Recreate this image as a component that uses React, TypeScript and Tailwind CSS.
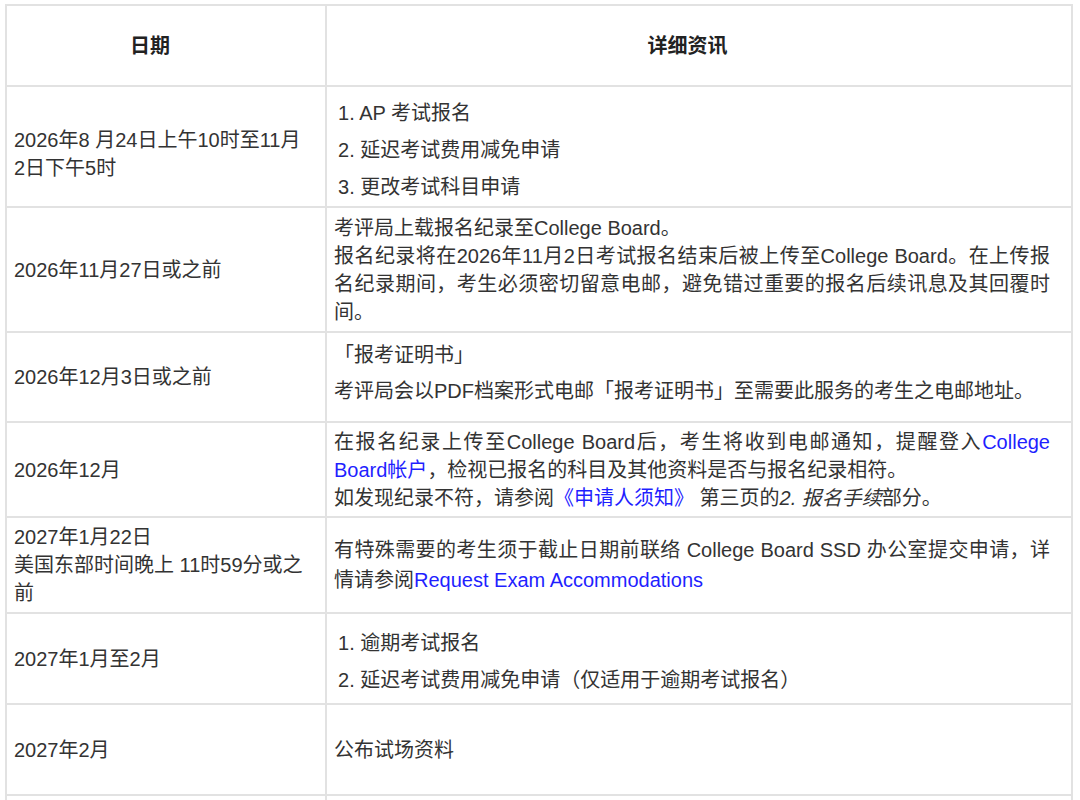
const font = { fontFamily: '"Liberation Sans", "Noto Sans CJK SC", sans-serif' };

function Link({ children }: { children: React.ReactNode }) {
  return <span className="text-[#1f1fff]">{children}</span>;
}

function Row({
  h,
  left,
  right,
  leftClass = "",
  rightClass = "",
}: {
  h: string;
  left: React.ReactNode;
  right: React.ReactNode;
  leftClass?: string;
  rightClass?: string;
}) {
  return (
    <div className={`flex border-b-2 border-[#e2e2e2] ${h}`}>
      <div className={`w-[320px] shrink-0 border-r-2 border-[#e2e2e2] pl-[7px] pr-[16px] flex items-center ${leftClass}`}>
        <div>{left}</div>
      </div>
      <div className={`flex-1 pl-[7px] pr-[21px] flex items-center ${rightClass}`}>
        <div className="w-full text-justify">{right}</div>
      </div>
    </div>
  );
}

function List({ items }: { items: string[] }) {
  return (
    <ol className="pl-[4px]">
      {items.map((t, i) => (
        <li key={i} className="h-[37px] flex items-center">
          {i + 1}. {t}
        </li>
      ))}
    </ol>
  );
}

export default function App() {
  return (
    <div className="min-h-[800px] bg-white overflow-hidden" style={font}>
      <div className="ml-[5px] mt-[4px] w-[1068px] border-x-2 border-t-2 border-[#e2e2e2] text-[20px] leading-[28px] text-[#333]">
        <div className="flex h-[81px] border-b-2 border-[#e2e2e2] font-bold text-[#222]">
          <div className="w-[320px] shrink-0 border-r-2 border-[#e2e2e2] flex items-center justify-center pr-[32px]">
            日期
          </div>
          <div className="flex-1 flex items-center justify-center pr-[23px]">详细资讯</div>
        </div>

        <Row
          h="h-[121px]"
          leftClass="pt-[14px]"
          rightClass="pt-[7px]"
          left="2026年8 月24日上午10时至11月2日下午5时"
          right={<List items={["AP 考试报名", "延迟考试费用减免申请", "更改考试科目申请"]} />}
        />

        <Row
          h="h-[125px]"
          left="2026年11月27日或之前"
          right={
            <>
              <p>考评局上载报名纪录至College Board。</p>
              <p>
                报名纪录将在2026年11月2日考试报名结束后被上传至College Board。在上传报名纪录期间，考生必须密切留意电邮，避免错过重要的报名后续讯息及其回覆时间。
              </p>
            </>
          }
        />

        <Row
          h="h-[90px]"
          left="2026年12月3日或之前"
          rightClass="pb-[8px]"
          right={
            <>
              <p>「报考证明书」</p>
              <p className="mt-[8px]">考评局会以PDF档案形式电邮「报考证明书」至需要此服务的考生之电邮地址。</p>
            </>
          }
        />

        <Row
          h="h-[95px]"
          left="2026年12月"
          right={
            <>
              <p>
                在报名纪录上传至College Board后，考生将收到电邮通知，提醒登入<Link>College Board帐户</Link>，检视已报名的科目及其他资料是否与报名纪录相符。
              </p>
              <p>
                如发现纪录不符，请参阅<Link>《申请人须知》</Link> 第三页的<i>2. 报名手续</i>部分。
              </p>
            </>
          }
        />

        <Row
          h="h-[96px]"
          left={
            <>
              <p>2027年1月22日</p>
              <p>美国东部时间晚上 11时59分或之前</p>
            </>
          }
          right={
            <p className="leading-[30px]">
              有特殊需要的考生须于截止日期前联络 College Board SSD 办公室提交申请，详情请参阅
              <Link>Request Exam Accommodations</Link>
            </p>
          }
        />

        <Row
          h="h-[91px]"
          left="2027年1月至2月"
          rightClass="pt-[6px]"
          right={<List items={["逾期考试报名", "延迟考试费用减免申请（仅适用于逾期考试报名）"]} />}
        />

        <Row h="h-[91px]" left="2027年2月" right={<p>公布试场资料</p>} />

        <Row h="h-[60px]" left="" right="" />
      </div>
    </div>
  );
}
